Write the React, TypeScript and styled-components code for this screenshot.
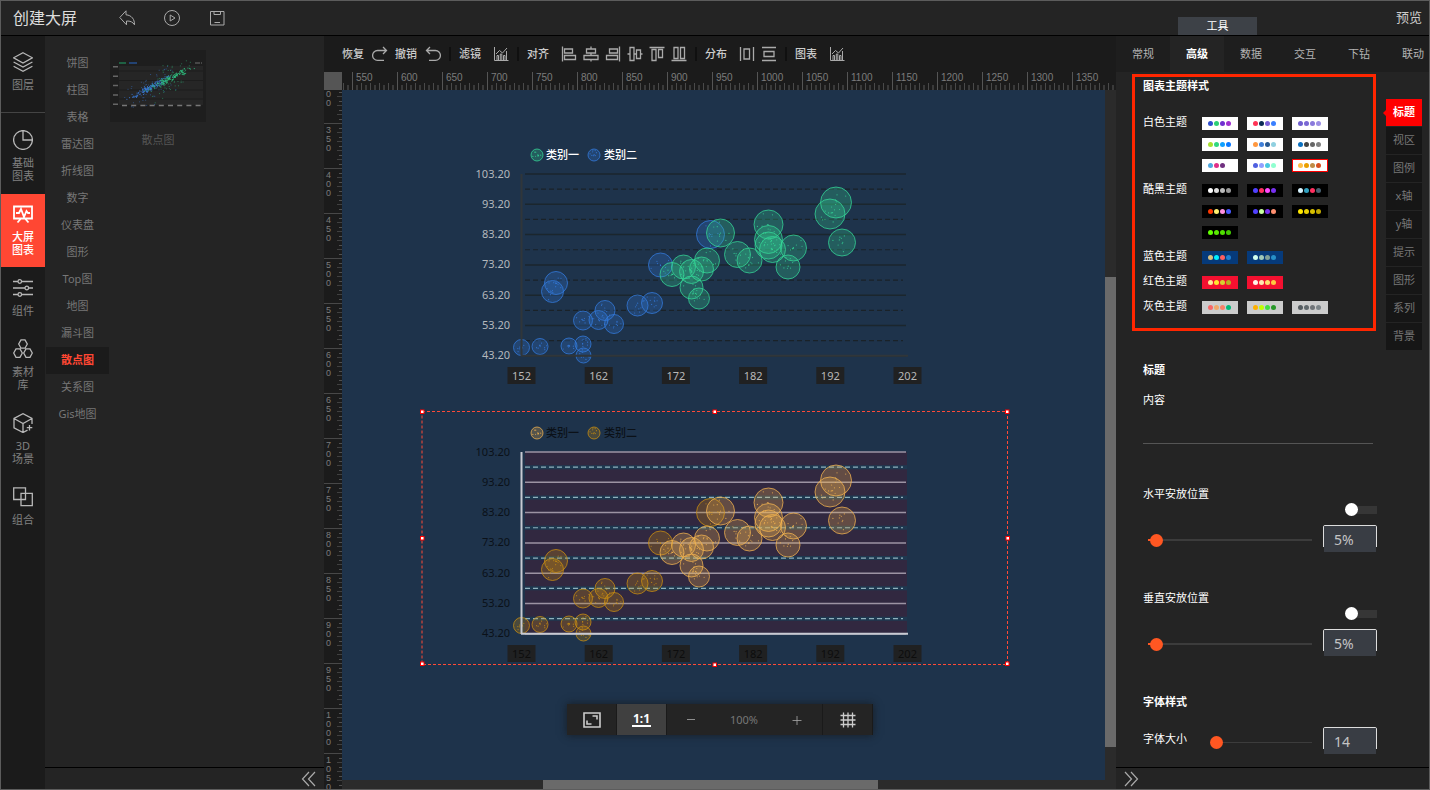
import React, { useState } from 'react';
import styled, { createGlobalStyle, css } from 'styled-components';

const GlobalStyle = createGlobalStyle`
  *, *::before, *::after { box-sizing: border-box; }
  body {
    margin: 0;
    background: #242424;
    color: #ccc;
    font-family: "Noto Sans", "Noto Sans CJK SC", sans-serif;
    font-size: 11px;
    line-height: 14px;
  }
  button, input { font-family: inherit; font-size: inherit; line-height: inherit; color: inherit; }
  button { border: 0; padding: 0; background: none; cursor: pointer; }
  svg { display: block; }
`;

/* ---------- page frame ---------- */

const Page = styled.div`
  display: flex;
  flex-direction: column;
  height: 100vh;
  min-height: 600px;
  border: 1px solid #5c5c5c;
  overflow: hidden;
`;

const Header = styled.header`
  display: flex;
  flex: none;
  height: 35px;
  border-bottom: 1px solid #000;
`;

const Title = styled.h1`
  margin: 0;
  padding: 8px 42px 0 12px;
  color: #ddd;
  font-size: 16px;
  font-weight: 400;
  line-height: 18px;
`;

const HeaderActions = styled.div`
  display: flex;
  flex: 1;
  align-items: center;
  gap: 29px;
`;

const IconButton = styled.button`
  display: grid;
  place-items: center;
  flex: none;
  color: #aaa;
`;

const HeaderTools = styled.div`
  display: flex;
  align-items: flex-end;
  justify-content: space-between;
  width: 313px;
  padding: 0 7px 0 62px;
`;

const ToolTab = styled.button`
  width: 79px;
  height: 18px;
  background: #3d4147;
  color: #fff;
`;

const Preview = styled.button`
  align-self: center;
  padding-bottom: 2px;
  color: #ccc;
  font-size: 13px;
`;

const Workspace = styled.main`
  display: grid;
  flex: 1;
  grid-template-columns: 44px 279px minmax(0, 1fr) 313px;
  min-height: 0;
`;

/* ---------- left side ---------- */

const Rail = styled.nav`
  display: flex;
  flex-direction: column;
  gap: 1px;
  background: #1b1b1b;
`;

const RailItem = styled.button<{ $active?: boolean; $tall?: boolean }>`
  display: flex;
  flex: none;
  flex-direction: column;
  align-items: center;
  gap: 6px;
  padding: ${p => (p.$tall ? '16px 0 11px' : '10px 0 11px')};
  background: ${p => (p.$active ? '#ff4733' : 'transparent')};
  color: ${p => (p.$active ? '#fff' : '#b8b8b8')};
  line-height: 13px;
`;

const RailText = styled.span<{ $active?: boolean }>`
  color: ${p => (p.$active ? '#fff' : '#808080')};
  font-weight: ${p => (p.$active ? 500 : 400)};
  white-space: pre-line;
`;

const RailTop = styled.div`
  display: flex;
  flex-direction: column;
  padding-bottom: 10px;
  border-bottom: 1px solid #444;
`;

const SidePanel = styled.section`
  display: flex;
  flex-direction: column;
  min-height: 0;
`;

const Library = styled.div`
  display: flex;
  flex: 1;
  gap: 1px;
  min-height: 0;
  padding: 14px 0 0 1px;
`;

const KindList = styled.ul`
  width: 63px;
  margin: 0;
  padding: 0;
  list-style: none;
`;

const KindButton = styled.button<{ $active?: boolean }>`
  width: 100%;
  height: 27px;
  padding-bottom: 2px;
  background: ${p => (p.$active ? '#1b1b1b' : 'transparent')};
  color: ${p => (p.$active ? '#ff4733' : '#777')};
  font-weight: ${p => (p.$active ? 700 : 400)};
`;

const Thumb = styled.figure`
  width: 96px;
  margin: 0;
  text-align: center;
`;

const ThumbCaption = styled.figcaption`
  padding-top: 11px;
  color: #555;
`;

const PanelFooter = styled.footer<{ $end?: boolean }>`
  display: flex;
  flex: none;
  align-items: center;
  justify-content: ${p => (p.$end ? 'flex-end' : 'flex-start')};
  height: 22px;
  padding: 0 7px;
  border-top: 1px solid #000;
`;

/* ---------- centre ---------- */

const Stage = styled.section`
  position: relative;
  display: grid;
  grid-template-columns: 18px minmax(0, 1fr) 11px;
  grid-template-rows: 36px 18px minmax(0, 1fr) 9px;
  min-height: 0;
`;

const Toolbar = styled.div`
  display: flex;
  grid-column: 1 / -1;
  align-items: center;
  gap: 7px;
  padding-left: 18px;
  background: #1b1b1b;
  color: #ccc;
  overflow: hidden;
`;

const ToolGroup = styled.div<{ $gap?: number }>`
  display: flex;
  flex: none;
  align-items: center;
  gap: ${p => p.$gap ?? 6}px;
`;

const ToolName = styled.span<{ $wide?: boolean }>`
  flex: none;
  width: ${p => (p.$wide ? 28 : 23)}px;
  font-weight: 500;
`;

const Divider = styled.span`
  flex: none;
  width: 2px;
  height: 14px;
  margin: 0 1px;
  background: #101010;
`;

const RulerCorner = styled.div`
  background: #555;
`;

const RulerX = styled.div`
  display: flex;
  grid-column: 2 / -1;
  background: #1b1b1b;
  overflow: hidden;
  & > :first-child { margin-left: -35px; }
`;

const RulerY = styled.div`
  display: flex;
  flex-direction: column;
  grid-row: 3 / -1;
  background: #1b1b1b;
  overflow: hidden;
  & > :first-child { margin-top: -12px; }
`;

const SegmentX = styled.span`
  flex: none;
  width: 45px;
  height: 18px;
  padding-left: 3px;
  border-left: 1px solid #555;
  background:
    repeating-linear-gradient(90deg, transparent 0 8px, #4a4a4a 8px 9px) 0 100% / 100% 7px no-repeat,
    repeating-linear-gradient(90deg, transparent 0 3px, #3a3a3a 3px 5px, transparent 5px 9px) 0 100% / 100% 5px no-repeat;
  color: #7c7c7c;
  font-family: "Liberation Sans", sans-serif;
  font-size: 10px;
  line-height: 11px;
`;

const SegmentY = styled.span`
  flex: none;
  width: 18px;
  height: 45px;
  padding: 2px 10px 0 2px;
  border-top: 1px solid #484848;
  background:
    repeating-linear-gradient(180deg, transparent 0 8px, #404040 8px 9px) 100% 0 / 5px 100% no-repeat,
    repeating-linear-gradient(180deg, transparent 0 4px, #505050 4px 5px, transparent 5px 9px) 100% 0 / 3px 100% no-repeat;
  color: #7c7c7c;
  font-family: "Liberation Sans", sans-serif;
  font-size: 9px;
  line-height: 9px;
  word-break: break-all;
`;

const Canvas = styled.div`
  position: relative;
  background: #1e334b;
  overflow: hidden;
`;

const ChartNode = styled.div<{ $x: number; $y: number }>`
  position: absolute;
  left: ${p => p.$x}px;
  top: ${p => p.$y}px;
`;

const ScrollY = styled.div`
  display: flex;
  flex-direction: column;
  grid-row: 3 / -1;
  grid-column: 3;
  padding-top: 187px;
  background: #2b2b2b;
`;

const ScrollX = styled.div`
  display: flex;
  grid-row: 4;
  grid-column: 2;
  padding-left: 201px;
  background: #2b2b2b;
`;

const ScrollThumb = styled.span<{ $vertical?: boolean }>`
  background: #6a6a6a;
  ${p => (p.$vertical ? css`height: 470px;` : css`width: 335px;`)}
`;

const ZoomBar = styled.div`
  position: absolute;
  bottom: 54px;
  left: 50%;
  display: flex;
  height: 31px;
  background: #242424;
  box-shadow: 0 0 8px rgba(20, 20, 20, 0.7);
  transform: translateX(-50%);
`;

const ZoomCell = styled.button<{ $active?: boolean }>`
  display: grid;
  place-items: center;
  width: 50px;
  border-right: 1px solid #1a1a1a;
  background: ${p => (p.$active ? '#404040' : 'transparent')};
  color: #ccc;
`;

const OneToOne = styled.span`
  padding: 0 1px;
  border-bottom: 2px solid #fff;
  color: #fff;
  font-size: 12px;
  font-weight: 700;
  line-height: 13px;
`;

const ZoomLevel = styled.div`
  display: flex;
  align-items: center;
  justify-content: space-between;
  width: 156px;
  padding: 0 20px 0 19px;
  border-right: 1px solid #1a1a1a;
  color: #777;
`;

/* ---------- right side ---------- */

const Tabs = styled.div`
  display: flex;
  flex: none;
  height: 36px;
  background: #1e1e1e;
  overflow: hidden;
`;

const Tab = styled.button<{ $active?: boolean }>`
  flex: none;
  width: 54px;
  background: ${p => (p.$active ? '#242424' : 'transparent')};
  color: ${p => (p.$active ? '#fff' : '#b4b4b4')};
  font-weight: ${p => (p.$active ? 700 : 400)};
`;

const Inspector = styled.div`
  display: flex;
  flex: 1;
  gap: 9px;
  min-height: 0;
  padding: 2px 7px 0 16px;
  overflow: hidden;
`;

const Settings = styled.div`
  width: 245px;
  color: #fff;
`;

const ThemeBox = styled.section`
  margin-right: 1px;
  padding: 2px 8px 14px;
  border: 3px solid #ff2600;
`;

const Heading = styled.h2`
  margin: 0;
  font-size: 11px;
  font-weight: 700;
  line-height: 14px;
`;

const ThemeList = styled.div`
  display: flex;
  flex-direction: column;
  gap: 12px;
  padding-top: 24px;
`;

const ThemeRow = styled.div`
  display: flex;
`;

const ThemeName = styled.span`
  width: 59px;
  height: 9px;
  line-height: 9px;
`;

const Swatches = styled.div`
  display: grid;
  grid-template-columns: repeat(3, 36px);
  gap: 8px 9px;
`;

const Swatch = styled.button<{ $bg: string; $on?: boolean }>`
  display: flex;
  align-items: center;
  justify-content: space-between;
  height: 13px;
  padding: 0 7px 0 6px;
  background: ${p => p.$bg};
  box-shadow: ${p => (p.$on ? 'inset 0 0 0 1px #f00' : 'none')};
`;

const Dot = styled.i<{ $c: string }>`
  width: 5px;
  height: 5px;
  border-radius: 3px;
  background: ${p => p.$c};
`;

const Form = styled.div`
  padding: 32px 0 0 11px;
`;

const Label = styled.label`
  display: block;
  line-height: 14px;
`;

const ContentField = styled.div`
  padding: 16px 4px 43px 0;
`;

const ContentInput = styled.input`
  display: block;
  width: 100%;
  height: 37px;
  padding: 0;
  border: 0;
  border-bottom: 1px solid #555;
  background: transparent;
  color: #ccc;
`;

const SwitchRow = styled.div`
  display: flex;
  justify-content: flex-end;
  padding: 2px 0 9px;
`;

const Switch = styled.input`
  display: flex;
  align-items: center;
  width: 32px;
  height: 13px;
  margin: 0;
  appearance: none;
  background: linear-gradient(#363636, #363636) 100% 50% / 26px 8px no-repeat;
  border-radius: 3px;
  &::before {
    width: 13px;
    height: 13px;
    border-radius: 50%;
    background: #fff;
    content: '';
  }
  &:checked { justify-content: flex-end; }
`;

const SliderRow = styled.div`
  display: flex;
  align-items: center;
  justify-content: space-between;
  margin-bottom: 38px;
`;

const Range = styled.input<{ $wide?: boolean }>`
  width: ${p => (p.$wide ? 176 : 113)}px;
  height: 13px;
  margin: 2px 5px 0 ${p => (p.$wide ? -1 : 0)}px;
  appearance: none;
  background:
    ${p => (p.$wide ? 'linear-gradient(#ff5722, #ff5722) 6px 50% / 8px 2px no-repeat,' : '')}
    linear-gradient(#3c3c3c, #3c3c3c) 50% 50% / calc(100% - 12px) ${p => (p.$wide ? 2 : 1)}px no-repeat;
  &::-webkit-slider-thumb {
    width: 13px;
    height: 13px;
    appearance: none;
    border-radius: 50%;
    background: #ff5722;
  }
`;

const ValueInput = styled.input`
  width: 54px;
  height: 28px;
  padding: 0 0 0 10px;
  border: 1px solid;
  border-color: #ddd transparent transparent;
  border-radius: 2px 2px 0 0;
  background:
    linear-gradient(#ddd, #ddd) 0 0 / 1px 22px no-repeat border-box,
    linear-gradient(#ddd, #ddd) 100% 0 / 1px 22px no-repeat border-box,
    linear-gradient(#393d44, #393d44) padding-box;
  color: #c4c4c4;
  font-size: 14px;
`;

const SizeRow = styled(SliderRow)`
  margin: 18px 0 0;
`;

const SizeLabel = styled(Label)`
  width: 62px;
  padding-bottom: 4px;
`;

const SideTabs = styled.div`
  display: flex;
  flex-direction: column;
  gap: 1px;
  width: 36px;
  padding-top: 25px;
`;

const SideTab = styled.button<{ $active?: boolean }>`
  position: relative;
  height: 27px;
  padding-bottom: 2px;
  background: ${p => (p.$active ? '#f00' : '#161616')};
  color: ${p => (p.$active ? '#fff' : '#777')};
  font-weight: ${p => (p.$active ? 700 : 400)};
  ${p => p.$active && css`
    &::before {
      position: absolute;
      top: 11px;
      left: -3px;
      border: 3px solid transparent;
      border-left: 0;
      border-right-color: #f00;
      content: '';
    }
  `}
`;

/* ---------- icons ---------- */

type IconProps = { d: string; size?: number; w?: number };

const Icon = ({ d, size = 16, w = 1 }: IconProps) => (
  <svg width={size} height={size} viewBox={`0 0 ${size} ${size}`} fill="none" stroke="currentColor" strokeWidth={w} aria-hidden="true">
    <path d={d} />
  </svg>
);

const headerIcons = [
  { name: '返回', d: 'M7 .8.8 7.5 7.5 14.8V11c3.600-.2 6.400 1 8 3.800.2-5.400-2.800-9.600-8.500-10z' },
  { name: '播放', d: 'M8 .5a7.500 7.500 0 1 0 0 15a7.500 7.500 0 1 0 0-15zM6.200 5v6L11 8z' },
  { name: '保存', d: 'M1.500 1.500h13.500v13.500h-13.500zM5 1.500v3h6.500v-3M5.500 12.500h5.500' },
];

const railIcons = {
  layers: 'M10 .8 19.400 5.800 10 11 .6 5.800zM.6 10 10 15l9.400-5M.6 14.200 10 19.200l9.400-5',
  pie: 'M10 .6a9.400 9.400 0 1 0 0 18.800a9.400 9.400 0 1 0 0-18.800zM10 .6V10h9.400',
  screen: 'M1 2.500h18v12H1zM3 9h3l2-4 3 8 2.500-6 1.500 2h2M8 14.500 4.500 18.500M12 14.500l3.500 4',
  sliders: 'M0 3.500h5M8.500 3.500H20M0 10h12M15.500 10H20M0 16.500h5M8.500 16.500H20M6.800 1.700a1.800 1.800 0 1 0 0 3.600a1.800 1.800 0 1 0 0-3.600M13.800 8.200a1.800 1.800 0 1 0 0 3.600a1.800 1.800 0 1 0 0-3.600M6.800 14.700a1.800 1.800 0 1 0 0 3.600a1.800 1.800 0 1 0 0-3.600',
  circles: 'M8 .9h4L14.300 5 12 9.200H8L5.700 5zM3 9.900h4L9.300 14 7 18.300H3L.7 14zM13 9.900h4l2.300 4.100-2.300 4.300h-4L10.700 14z',
  cube: 'M19 11V5.500L10 .7 1 5.500v9.300l9 4.700 4.500-2.300M1 5.500l9 5 9-5M10 10.500v9M16.500 12v5.500M13.800 14.700h5.500',
  combine: 'M8 12.500H.7V.8h11.800V6M8 6.300h11.300v12.400H8zM8 12.500h4.500V6.300',
};

const toolIcons = {
  redo: 'M11 1l3.500 3.500L11 8M14 4.500H5.500a4.700 4.700 0 0 0 0 9.800H12',
  undo: 'M5 1 1.500 4.500 5 8M2 4.500h8.500a4.700 4.700 0 0 1 0 9.800H4',
  chart: 'M1.500 1v13.500H15.500M4 14V9.500h1.500V14M7.300 14V8h1.500v6M10.500 14V9.500H12V14M13.500 14V5M3 8l3.500-3.500L9.500 7 14 2',
};

const alignIcons = [
  { name: '左对齐', d: 'M1.500 .5v15M3.500 3h8v4h-8zM3.500 9.500h11v4h-11z' },
  { name: '水平居中', d: 'M8 .5V3M8 7v2.500M8 13.500v2M3.500 3h9v4h-9zM1 9.500h14v4H1z' },
  { name: '右对齐', d: 'M14.500 .5v15M4.500 3h8v4h-8zM1.500 9.500h11v4h-11z' },
  { name: '垂直居中', d: 'M.5 8H3M7 8h2.500M13.500 8h2M3 1.500h4v13H3zM9.500 4h4v8.500h-4z' },
  { name: '顶部对齐', d: 'M.5 1.500h15M3 3.500h4v11H3zM9.500 3.500h4v8h-4z' },
  { name: '底部对齐', d: 'M.5 14.500h15M3 1.500h4v11H3zM9.500 1.500h4v11h-4z' },
];

const spreadIcons = [
  { name: '水平分布', d: 'M1.500 1v14M14.500 1v14M5 3h5.500v10H5z' },
  { name: '垂直分布', d: 'M1 1.500h14M1 14.500h14M3 5.500h10v5H3z' },
];

/* ---------- data ---------- */

const kinds = ['饼图', '柱图', '表格', '雷达图', '折线图', '数字', '仪表盘', '图形', 'Top图', '地图', '漏斗图', '散点图', '关系图', 'Gis地图'];

const rail = [
  { name: '基础\n图表', d: railIcons.pie, tall: true },
  { name: '大屏\n图表', d: railIcons.screen, active: true },
  { name: '组件', d: railIcons.sliders },
  { name: '素材\n库', d: railIcons.circles },
  { name: '3D\n场景', d: railIcons.cube },
  { name: '组合', d: railIcons.combine },
];

const themes = [
  {
    name: '白色主题', bg: '#fff', sets: [
      ['#2f4fcf', '#2dcf75', '#7030d0', '#a030d0'],
      ['#ff3355', '#0a2a55', '#7a5fd8', '#3a80ff'],
      ['#7060d0', '#7a68d4', '#8a7adc', '#9c8ee4'],
      ['#a8e030', '#30d880', '#10a0ff', '#0a78ff'],
      ['#ff9840', '#4080d8', '#285890', '#90d0e0'],
      ['#0a70c0', '#444', '#666', '#808080'],
      ['#50a8e0', '#e03088', '#703080', 'transparent'],
      ['#5060e0', '#90a0ff', '#48c8e0', '#90ffd0'],
      ['#ffc048', '#eaa000', '#c08c48', '#d85020'],
    ],
  },
  {
    name: '酷黑主题', bg: '#000', sets: [
      ['#fff', '#ddd', '#bbb', '#999'],
      ['#5040ff', '#ff3060', '#ff48ff', '#7830f0'],
      ['#d8f4ff', '#30a0c0', '#ff3060', '#486070'],
      ['#ff3800', '#fff070', '#ff90e0', '#4858ff'],
      ['#5040ff', '#c8ffa0', '#7830f0', '#ff9070'],
      ['#ffe800', '#e8d000', '#d8c000', '#c0a800'],
      ['#60ff00', '#58e800', '#50e000', '#40c800'],
    ],
  },
  { name: '蓝色主题', bg: '#063a7a', sets: [['#d8c080', '#00f0ff', '#ff6060', '#2080d0'], ['#d0fff0', '#a0c8b8', '#80a098', '#2890c8']] },
  { name: '红色主题', bg: '#f41030', sets: [['#ffe898', '#ffe830', '#d8d030', '#b8b020'], ['#fff4e8', '#ffe8b0', '#ffe070', '#ffc840']] },
  { name: '灰色主题', bg: '#ccc', sets: [['#f86868', '#f0a868', '#f88068', '#00b878'], ['#ffb000', '#c0ff00', '#40e040', '#289828'], ['#555c60', '#60686c', '#707478', '#7c8488']] },
];

const classTwo = [
  [99.5, 214.5, 8.5], [118, 213.5, 8.5], [147, 213, 8.5], [161, 211, 8.5], [161.5, 222.5, 8], [161, 187.5, 10],
  [176.5, 187, 10], [183, 177.5, 10.5], [192, 191, 10], [215.5, 172.5, 11], [230, 170, 11], [130.5, 158.5, 11.5],
  [134, 150, 12], [238.5, 132, 12.5], [288.5, 101.5, 14.5],
];

const classOne = [
  [298.5, 100, 14.5], [315.5, 121.5, 13.5], [327.5, 127.5, 13], [346.5, 91.5, 15], [346.5, 106.5, 14.5],
  [346.5, 112.5, 14], [350.5, 116.5, 13.5], [371.5, 115, 13.5], [366, 134, 12.5], [414, 69.5, 16], [408, 81, 15.5],
  [420, 109.5, 14], [250, 141.5, 12.5], [261.5, 134, 12.5], [269.5, 138.5, 12.5], [285, 127.5, 13], [279.5, 136, 12.5],
  [269.5, 154.5, 12], [277, 165.5, 11],
];

const noise = (seed: number) => {
  const v = Math.sin(seed * 127.1) * 43758.5453;
  return v - Math.floor(v);
};

/* ---------- charts ---------- */

type Palette = {
  one: string; two: string; text: string; legend: string; grid: string; gridWidth: number;
  minor: string; axis: string; tick: string; band?: boolean;
};

const darkPalette: Palette = {
  one: '#36d898', two: '#347ce0', text: '#b4b8bc', legend: '#fff', grid: '#1b262d', gridWidth: 1.5,
  minor: '#1a2228', axis: '#30363a', tick: '#b8b8b8',
};

const amberPalette: Palette = {
  one: '#f4b450', two: '#cc9010', text: '#0b1118', legend: '#0b1118', grid: '#9c93a3', gridWidth: 1.5,
  minor: '#8fb0bc', axis: '#c8cad2', tick: '#0d0d0d', band: true,
};

const Bubble = ({ x, y, r, color, seed }: { x: number; y: number; r: number; color: string; seed: number }) => (
  <g>
    <circle cx={x} cy={y} r={r - 0.5} fill={color} fillOpacity={0.26} stroke={color} strokeOpacity={0.75} />
    {Array.from({ length: 9 }, (_, i) => {
      const angle = noise(seed * 31 + i) * 6.28;
      const reach = noise(seed * 17 + i * 3 + 1) * r * 0.8;
      return (
        <circle key={i} cx={x + Math.cos(angle) * reach} cy={y + Math.sin(angle) * reach} r={0.6} fill={color} fillOpacity={0.8} />
      );
    })}
  </g>
);

const ScatterChart = ({ p }: { p: Palette }) => {
  const rows = [0, 1, 2, 3, 4, 5, 6];
  const top = 41;
  const step = 30.3;
  return (
    <svg width="586" height="253" viewBox="0 0 586 253" fontSize="11" role="img" aria-label="散点图">
      {p.band && <rect x="103" y={top} width="382" height={step * 6} fill="#312840" />}
      {rows.slice(0, 6).map(i => {
        const y = top + step * (i + 0.5);
        return (
          <g key={i}>
            {p.band && <path d={`M103 ${y}H485`} stroke="#1e3850" strokeWidth={4} />}
            <path d={`M103 ${y}H481`} stroke={p.minor} strokeWidth={1.2} strokeDasharray="5 3" />
          </g>
        );
      })}
      {rows.map(i => (
        <path key={i} d={`M103 ${top + step * i}H484`} stroke={p.grid} strokeWidth={p.gridWidth} />
      ))}
      {classTwo.map(([x, y, r], i) => <Bubble key={i} x={x} y={y} r={r} color={p.two} seed={i + 40} />)}
      {classOne.map(([x, y, r], i) => <Bubble key={i} x={x} y={y} r={r} color={p.one} seed={i + 1} />)}
      <path d="M99.500 41V223M99 222.800H486" stroke={p.axis} strokeWidth={2} fill="none" />
      {rows.map(i => (
        <text key={i} x="88" y={top + step * i + 3.5} textAnchor="end" fill={p.text}>{`${103 - i * 10}.20`}</text>
      ))}
      {[0, 1, 2, 3, 4, 5].map(i => (
        <g key={i}>
          <rect x={85.5 + i * 77.2} y="234" width="28" height="17" fill="#202122" />
          <text x={99.5 + i * 77.2} y="246.500" textAnchor="middle" fill={p.tick}>{152 + i * 10}</text>
        </g>
      ))}
      <Bubble x={115} y={22} r={6.5} color={p.one} seed={5} />
      <text x="124" y="25.500" fill={p.legend} fontWeight="500">类别一</text>
      <Bubble x={172} y={22} r={6.5} color={p.two} seed={9} />
      <text x="182" y="25.500" fill={p.legend} fontWeight="500">类别二</text>
    </svg>
  );
};

const Selection = () => (
  <svg width="593" height="259" viewBox="0 0 593 259" aria-hidden="true">
    <rect x="4" y="3.500" width="585.500" height="253" fill="none" stroke="#ff4a36" strokeDasharray="3 2" />
    {[[4, 3.5], [296.5, 3.5], [589, 3.5], [4, 130], [589.5, 130], [4, 255.5], [296.5, 256.5], [589, 255.5]].map(([x, y], i) => (
      <rect key={i} x={x - 1.5} y={y - 1.5} width="3.500" height="3.500" fill="#fff" stroke="#f00" />
    ))}
  </svg>
);

const ThumbChart = () => {
  const cloud = (n: number, cx: number, cy: number, spread: number, seed: number, color: string) =>
    Array.from({ length: n }, (_, i) => {
      const t = noise(seed + i) + noise(seed + i * 2 + 7) + noise(seed + i * 5 + 3) - 1.5;
      const wide = i % 3 === 0 ? 20 : 4;
      const s = (noise(seed + i * 3 + 11) + noise(seed + i * 7 + 5) - 1) * wide;
      return (
        <rect key={`${color}${i}`} x={cx + t * spread} y={cy - t * spread * 0.5 + s} width="1" height="1" fill={color} opacity={i % 3 ? 0.9 : 0.5} />
      );
    });
  return (
    <svg width="96" height="72" viewBox="0 0 96 72" role="img" aria-label="散点图">
      <rect width="96" height="72" fill="#1e1e1e" />
      <rect x="9" y="16" width="84" height="39" fill="#262626" />
      <path d="M9 21h84M9 30.500h84M9 40h84M9 49h84" stroke="#1d1d1d" />
      <path d="M9 13h7" stroke="#207850" strokeWidth="1.500" />
      <path d="M19 13h8" stroke="#265090" strokeWidth="1.500" />
      <path d="M85 13h7" stroke="#555" strokeWidth="1.500" strokeDasharray="5 1 1" />
      <path d="M5.500 16v41" stroke="#666" strokeWidth="5" strokeDasharray="1.500 7.900" />
      <path d="M12 55.500h81" stroke="#777" strokeWidth="1.500" strokeDasharray="5 4.200" />
      {cloud(210, 40, 37, 20, 3, '#3a7ad8')}
      {cloud(190, 60, 28, 20, 91, '#30c080')}
    </svg>
  );
};

/* ---------- settings ---------- */

const PositionField = ({ id, name }: { id: string; name: string }) => {
  const [value, setValue] = useState(5);
  return (
    <div>
      <Label htmlFor={id}>{name}</Label>
      <SwitchRow><Switch type="checkbox" role="switch" aria-label={`${name}开关`} /></SwitchRow>
      <SliderRow>
        <Range $wide id={id} type="range" min={0} max={100} value={value} onChange={e => setValue(Number(e.target.value))} />
        <ValueInput type="text" aria-label={`${name}数值`} value={`${value}%`} onChange={e => setValue(parseInt(e.target.value, 10) || 0)} />
      </SliderRow>
    </div>
  );
};

const SizeField = () => {
  const [size, setSize] = useState(14);
  return (
    <SizeRow>
      <SizeLabel htmlFor="font-size">字体大小</SizeLabel>
      <Range id="font-size" type="range" min={12} max={52} value={size} onChange={e => setSize(Number(e.target.value))} />
      <ValueInput type="text" aria-label="字体大小数值" value={size} onChange={e => setSize(parseInt(e.target.value, 10) || 12)} />
    </SizeRow>
  );
};

export default function App() {
  const [picked, setPicked] = useState('白色主题8');
  return (
    <Page>
      <GlobalStyle />
      <Header>
        <Title>创建大屏</Title>
        <HeaderActions>
          {headerIcons.map(i => <IconButton key={i.name} aria-label={i.name}><Icon d={i.d} /></IconButton>)}
        </HeaderActions>
        <HeaderTools>
          <ToolTab>工具</ToolTab>
          <Preview>预览</Preview>
        </HeaderTools>
      </Header>

      <Workspace>
        <Rail>
          <RailTop>
            <RailItem $tall><Icon size={20} w={1.3} d={railIcons.layers} /><RailText>图层</RailText></RailItem>
          </RailTop>
          {rail.map(r => (
            <RailItem key={r.name} $active={r.active} $tall={r.tall}>
              <Icon size={20} w={r.active ? 1.8 : 1.3} d={r.d} />
              <RailText $active={r.active}>{r.name}</RailText>
            </RailItem>
          ))}
        </Rail>

        <SidePanel>
          <Library>
            <KindList>
              {kinds.map(k => <li key={k}><KindButton $active={k === '散点图'}>{k}</KindButton></li>)}
            </KindList>
            <Thumb>
              <ThumbChart />
              <ThumbCaption>散点图</ThumbCaption>
            </Thumb>
          </Library>
          <PanelFooter $end>
            <IconButton aria-label="收起左侧"><Icon w={1.2} d="M8 1 1.500 8 8 15M14 1 7.500 8l6.500 7" /></IconButton>
          </PanelFooter>
        </SidePanel>

        <Stage>
          <Toolbar>
            <ToolGroup $gap={7}>
              <ToolName>恢复</ToolName><IconButton aria-label="恢复"><Icon w={1.3} d={toolIcons.redo} /></IconButton>
              <ToolName>撤销</ToolName><IconButton aria-label="撤销"><Icon w={1.3} d={toolIcons.undo} /></IconButton>
            </ToolGroup>
            <Divider />
            <ToolGroup>
              <ToolName $wide>滤镜</ToolName><IconButton aria-label="滤镜"><Icon d={toolIcons.chart} /></IconButton>
            </ToolGroup>
            <Divider />
            <ToolGroup>
              <ToolName $wide>对齐</ToolName>
              {alignIcons.map(i => <IconButton key={i.name} aria-label={i.name}><Icon w={1.3} d={i.d} /></IconButton>)}
            </ToolGroup>
            <Divider />
            <ToolGroup>
              <ToolName $wide>分布</ToolName>
              {spreadIcons.map(i => <IconButton key={i.name} aria-label={i.name}><Icon w={1.3} d={i.d} /></IconButton>)}
            </ToolGroup>
            <Divider />
            <ToolGroup>
              <ToolName $wide>图表</ToolName><IconButton aria-label="图表"><Icon d={toolIcons.chart} /></IconButton>
            </ToolGroup>
          </Toolbar>

          <RulerCorner />
          <RulerX>{Array.from({ length: 18 }, (_, i) => <SegmentX key={i}>{i > 0 && 500 + i * 50}</SegmentX>)}</RulerX>
          <RulerY>{Array.from({ length: 16 }, (_, i) => <SegmentY key={i}>{300 + i * 50}</SegmentY>)}</RulerY>
          <Canvas>
            <ChartNode $x={80} $y={43}><ScatterChart p={darkPalette} /></ChartNode>
            <ChartNode $x={80} $y={321}><ScatterChart p={amberPalette} /></ChartNode>
            <ChartNode $x={76} $y={318}><Selection /></ChartNode>
          </Canvas>
          <ScrollY><ScrollThumb $vertical /></ScrollY>
          <ScrollX><ScrollThumb /></ScrollX>

          <ZoomBar>
            <ZoomCell aria-label="全屏">
              <Icon size={18} w={1.6} d="M1 2h16v14H1zM9.500 5H14v3.500M8.500 13H4V9.500" />
            </ZoomCell>
            <ZoomCell $active><OneToOne>1:1</OneToOne></ZoomCell>
            <ZoomLevel>
              <IconButton aria-label="缩小"><Icon size={10} w={0.8} d="M1 4.500h8" /></IconButton>
              <span>100%</span>
              <IconButton aria-label="放大"><Icon size={10} w={0.8} d="M.5 5.500h9M5 1v9" /></IconButton>
            </ZoomLevel>
            <ZoomCell aria-label="网格">
              <Icon w={1.3} d="M.5 3.500h15M.5 8h15M.5 12.500h15M3.500 .5v15M8 .5v15M12.500 .5v15" />
            </ZoomCell>
          </ZoomBar>
        </Stage>

        <SidePanel>
          <Tabs>
            {['常规', '高级', '数据', '交互', '下钻', '联动'].map(t => <Tab key={t} $active={t === '高级'}>{t}</Tab>)}
          </Tabs>
          <Inspector>
            <Settings>
              <ThemeBox>
                <Heading>图表主题样式</Heading>
                <ThemeList>
                  {themes.map(t => (
                    <ThemeRow key={t.name}>
                      <ThemeName>{t.name}</ThemeName>
                      <Swatches>
                        {t.sets.map((set, i) => (
                          <Swatch
                            key={i}
                            $bg={t.bg}
                            $on={picked === t.name + i}
                            aria-label={`${t.name}${i + 1}`}
                            onClick={() => setPicked(t.name + i)}
                          >
                            {set.map((c, j) => <Dot key={j} $c={c} />)}
                          </Swatch>
                        ))}
                      </Swatches>
                    </ThemeRow>
                  ))}
                </ThemeList>
              </ThemeBox>
              <Form>
                <Heading>标题</Heading>
                <ContentField>
                  <Label htmlFor="title-text">内容</Label>
                  <ContentInput id="title-text" type="text" />
                </ContentField>
                <PositionField id="pos-x" name="水平安放位置" />
                <PositionField id="pos-y" name="垂直安放位置" />
                <Heading>字体样式</Heading>
                <SizeField />
              </Form>
            </Settings>
            <SideTabs>
              {['标题', '视区', '图例', 'x轴', 'y轴', '提示', '图形', '系列', '背景'].map(t => (
                <SideTab key={t} $active={t === '标题'}>{t}</SideTab>
              ))}
            </SideTabs>
          </Inspector>
          <PanelFooter>
            <IconButton aria-label="收起右侧"><Icon w={1.2} d="M2 1l6.500 7L2 15M8 1l6.500 7L8 15" /></IconButton>
          </PanelFooter>
        </SidePanel>
      </Workspace>
    </Page>
  );
}
